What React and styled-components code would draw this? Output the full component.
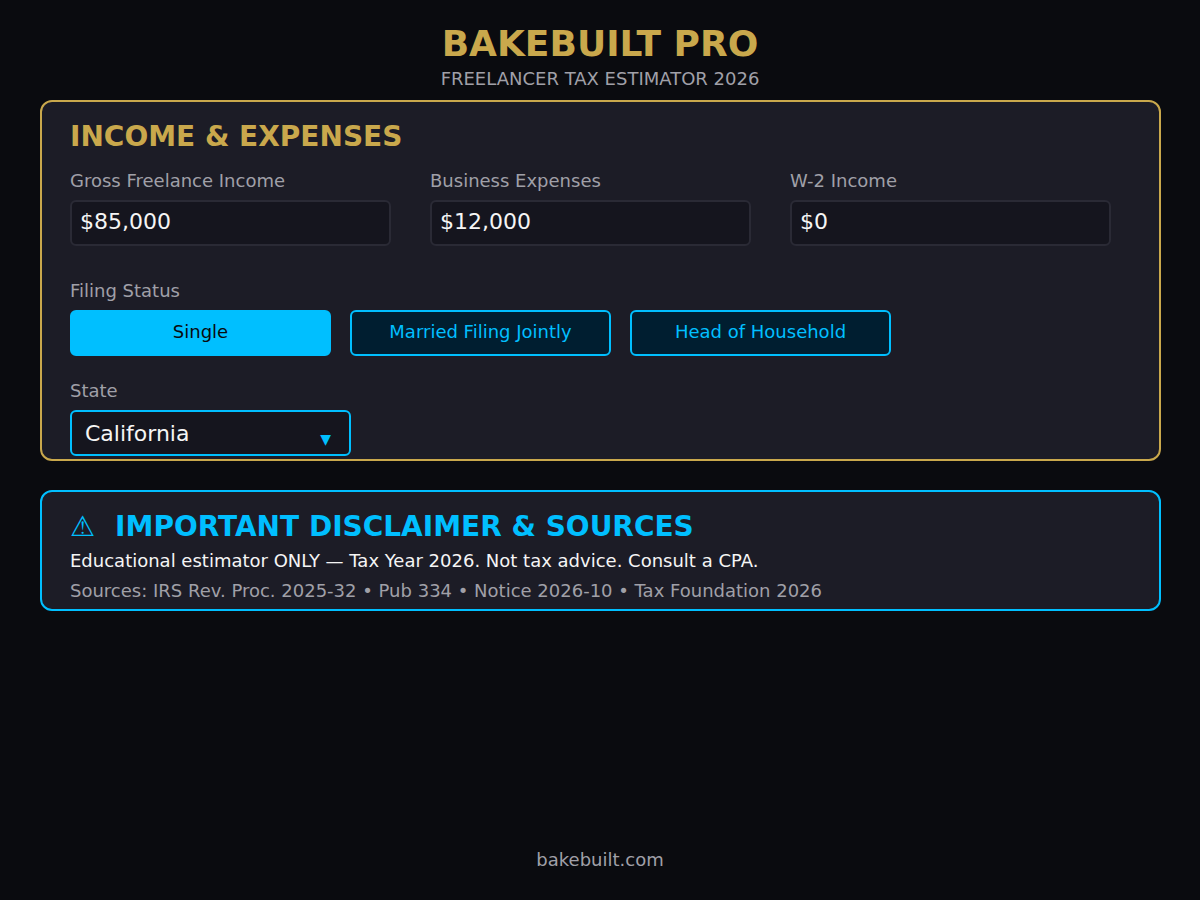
import React, { useState } from 'react'
import styled, { createGlobalStyle } from 'styled-components'

const FILING_OPTIONS = ['Single', 'Married Filing Jointly', 'Head of Household']
const STATES = ['California', 'New York', 'Texas', 'Florida', 'Washington']

const App = () => {
  const [income, setIncome] = useState({ gross: '$85,000', expenses: '$12,000', w2: '$0' })
  const [status, setStatus] = useState('Single')
  const [region, setRegion] = useState('California')

  const onChange = (e) => setIncome({ ...income, [e.target.name]: e.target.value })

  return (
    <Page>
      <GlobalStyle />
      <Header>
        <Title>BAKEBUILT PRO</Title>
        <Subtitle>FREELANCER TAX ESTIMATOR 2026</Subtitle>
      </Header>

      <Main>
        <Panel $color={GOLD}>
          <PanelTitle $color={GOLD}>INCOME &amp; EXPENSES</PanelTitle>
          <IncomeRow>
            <Field>
              <Label htmlFor='gross'>Gross Freelance Income</Label>
              <Input id='gross' name='gross' value={income.gross} onChange={onChange} />
            </Field>
            <Field>
              <Label htmlFor='expenses'>Business Expenses</Label>
              <Input id='expenses' name='expenses' value={income.expenses} onChange={onChange} />
            </Field>
            <Field>
              <Label htmlFor='w2'>W-2 Income</Label>
              <Input id='w2' name='w2' value={income.w2} onChange={onChange} />
            </Field>
          </IncomeRow>

          <StatusField role='group' aria-labelledby='filing-status'>
            <Label as='span' id='filing-status'>Filing Status</Label>
            <StatusRow>
              {FILING_OPTIONS.map((option) => (
                <StatusButton
                  key={option}
                  type='button'
                  $active={option === status}
                  aria-pressed={option === status}
                  onClick={() => setStatus(option)}
                >
                  {option}
                </StatusButton>
              ))}
            </StatusRow>
          </StatusField>

          <Field>
            <Label htmlFor='state'>State</Label>
            <SelectBox>
              <Select id='state' value={region} onChange={(e) => setRegion(e.target.value)}>
                {STATES.map((name) => (
                  <option key={name}>{name}</option>
                ))}
              </Select>
              <Arrow aria-hidden='true'>▼</Arrow>
            </SelectBox>
          </Field>
        </Panel>

        <Panel $color={CYAN}>
          <PanelTitle $color={CYAN}>
            <Warning aria-hidden='true'>⚠</Warning>
            IMPORTANT DISCLAIMER &amp; SOURCES
          </PanelTitle>
          <Notes>
            <Note>Educational estimator ONLY — Tax Year 2026. Not tax advice. Consult a CPA.</Note>
            <Note $muted>Sources: IRS Rev. Proc. 2025-32 • Pub 334 • Notice 2026-10 • Tax Foundation 2026</Note>
          </Notes>
        </Panel>
      </Main>

      <Footer>
        <FooterLink href='#'>bakebuilt.com</FooterLink>
      </Footer>
    </Page>
  )
}

export default App

const GOLD = '#c9a84c'
const CYAN = '#00bfff'
const MUTED = '#a0a0a8'
const TEXT = '#f5f5f5'

const GlobalStyle = createGlobalStyle`
  * {
    box-sizing: border-box;
  }

  body {
    margin: 0;
    background: #0a0b0f;
    font-family: 'DejaVu Sans', sans-serif;
    font-size: 18px;
    line-height: 20px;
  }
`

const Page = styled.div`
  display: flex;
  flex-direction: column;
  min-height: 100vh;
`

const Header = styled.header`
  display: flex;
  flex-direction: column;
  align-items: center;
  gap: 5px;
  padding: 24px 40px 11px;
`

const Title = styled.h1`
  margin: 0;
  color: ${GOLD};
  font-size: 36px;
  line-height: 40px;
`

const Subtitle = styled.p`
  margin: 0;
  color: ${MUTED};
`

const Main = styled.main`
  display: flex;
  flex-direction: column;
  gap: 29px;
  padding: 0 39px 0 40px;
`

const Panel = styled.section`
  padding: 19px 28px 3px;
  border: 2px solid ${(props) => props.$color};
  border-radius: 12px;
  background: #1c1c26;
`

const PanelTitle = styled.h2`
  display: flex;
  gap: 20px;
  margin: 0;
  color: ${(props) => props.$color};
  font-size: 28px;
  line-height: 32px;
`

const Warning = styled.span`
  font-weight: 400;
`

const Field = styled.div`
  display: flex;
  flex-direction: column;
  gap: 9px;
`

const IncomeRow = styled.div`
  display: grid;
  grid-template-columns: repeat(3, 1fr);
  gap: 39px;
  margin: 18px 20px 35px 0;
`

const StatusField = styled(Field)`
  margin-bottom: 25px;
`

const StatusRow = styled.div`
  display: flex;
  flex-wrap: wrap;
  gap: 19px;
`

const Label = styled.label`
  color: ${MUTED};
`

const Input = styled.input`
  width: 100%;
  height: 46px;
  padding: 0 8px 4px;
  border: 2px solid #2a2a35;
  border-radius: 6px;
  background: #15151e;
  color: ${TEXT};
  font-family: inherit;
  font-size: 22px;
`

const StatusButton = styled.button`
  width: 261px;
  height: 46px;
  padding: 0 8px 4px;
  border: 2px solid ${CYAN};
  border-radius: 6px;
  background: ${(props) => (props.$active ? CYAN : '#001e30')};
  color: ${(props) => (props.$active ? '#0a0b0f' : CYAN)};
  font-family: inherit;
  font-size: 18px;
  cursor: pointer;
`

const SelectBox = styled.div`
  display: grid;
  align-items: center;
  width: 281px;
`

const Select = styled.select`
  grid-area: 1 / 1;
  height: 46px;
  padding: 0 40px 0 13px;
  border: 2px solid ${CYAN};
  border-radius: 6px;
  background: #15151e;
  color: ${TEXT};
  font-family: inherit;
  font-size: 22px;
  appearance: none;
`

const Arrow = styled.span`
  grid-area: 1 / 1;
  justify-self: end;
  padding: 12px 20px 0 0;
  color: ${CYAN};
  font-size: 14px;
  pointer-events: none;
`

const Notes = styled.div`
  display: grid;
  gap: 10px;
  padding: 8px 0 5px;
`

const Note = styled.p`
  margin: 0;
  color: ${(props) => (props.$muted ? MUTED : TEXT)};
`

const Footer = styled.footer`
  margin-top: auto;
  padding: 30px;
  text-align: center;
`

const FooterLink = styled.a`
  color: ${MUTED};
  text-decoration: none;
`
